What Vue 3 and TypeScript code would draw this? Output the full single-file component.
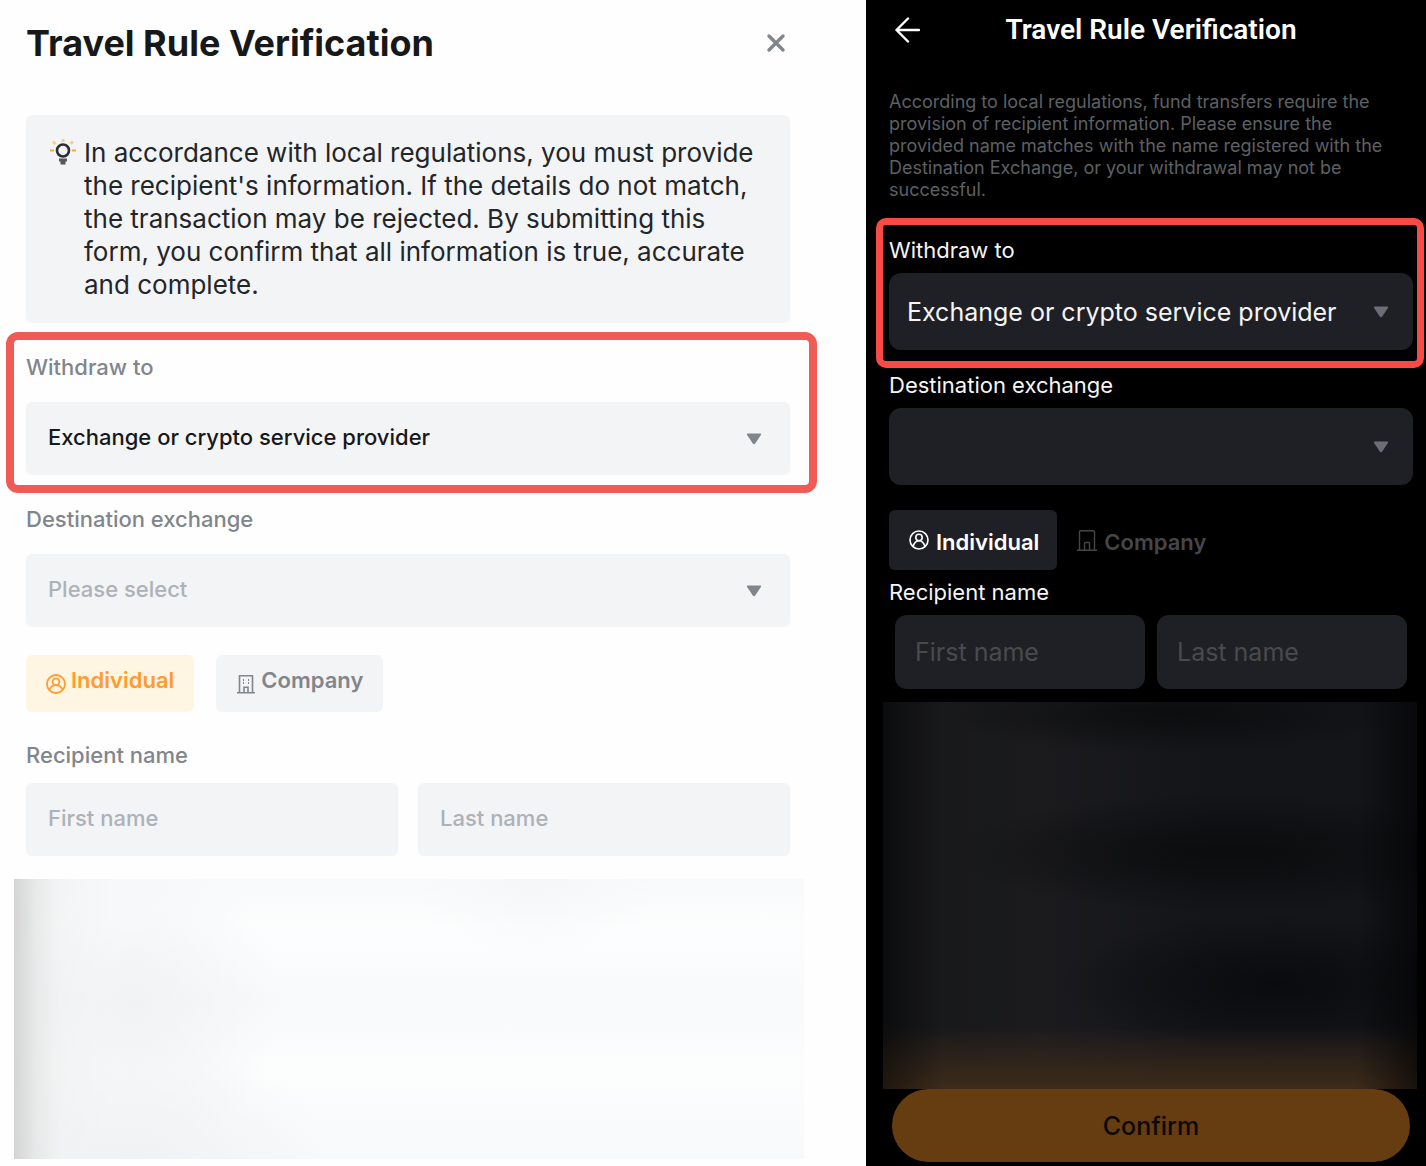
<script setup lang="ts">
import { ref } from 'vue'

type RecipientKind = 'individual' | 'company'

const destinations = ['Exchange or crypto service provider', 'Private wallet']
const exchanges = ['Binance', 'Coinbase', 'Kraken']

const webDestination = ref(destinations[0])
const webExchange = ref('')
const webKind = ref<RecipientKind>('individual')
const webFirst = ref('')
const webLast = ref('')

const appDestination = ref(destinations[0])
const appExchange = ref('')
const appKind = ref<RecipientKind>('individual')
const appFirst = ref('')
const appLast = ref('')
</script>

<template>
  <main class="page">
    <section class="web" aria-labelledby="web-title">
      <header class="web-header">
        <h1 id="web-title">Travel Rule Verification</h1>
        <button type="button" class="icon-button close" aria-label="Close">
          <svg width="20" height="20" viewBox="0 0 20 20" fill="none" stroke="#81858c" stroke-width="3.400" stroke-linecap="round">
            <path d="M3 3 17 17M17 3 3 17" />
          </svg>
        </button>
      </header>

      <div class="notice">
        <svg class="bulb" width="26" height="26" viewBox="0 0 26 26" fill="none">
          <circle cx="13" cy="11.500" r="6" stroke="#2c2e31" stroke-width="2.600" />
          <path d="M9 21h8M10.500 24h5" stroke="#55575a" stroke-width="3" />
          <path d="M0 11.500h4M22 11.500h4" stroke="#f7a928" stroke-width="2" />
          <path d="M13 0v3M3 2.500l2.500 2.500M23 2.500l-2.500 2.500" stroke="#f9cf88" stroke-width="3" />
        </svg>
        <p>
          In accordance with local regulations, you must provide the recipient's information. If the details do
          not match, the transaction may be rejected. By submitting this form, you confirm that all information
          is true, accurate and complete.
        </p>
      </div>

      <div class="field marked">
        <label for="web-destination">Withdraw to</label>
        <div class="select">
          <select id="web-destination" v-model="webDestination">
            <option v-for="item in destinations" :key="item">{{ item }}</option>
          </select>
          <svg class="caret" width="16" height="12" viewBox="0 0 16 12"><path d="M1.500.5h13q1.200.3.400 1.500L9.200 10.600Q8 12 6.800 10.600L1.100 2Q.3.8 1.500.5Z" /></svg>
        </div>
      </div>

      <div class="field">
        <label for="web-exchange">Destination exchange</label>
        <div class="select">
          <select id="web-exchange" v-model="webExchange" :class="{ empty: !webExchange }">
            <option value="">Please select</option>
            <option v-for="item in exchanges" :key="item">{{ item }}</option>
          </select>
          <svg class="caret" width="16" height="12" viewBox="0 0 16 12"><path d="M1.500.5h13q1.200.3.400 1.500L9.200 10.600Q8 12 6.800 10.600L1.100 2Q.3.8 1.500.5Z" /></svg>
        </div>
      </div>

      <div class="kinds">
        <button type="button" :class="{ active: webKind === 'individual' }" :aria-pressed="webKind === 'individual'" @click="webKind = 'individual'">
          <svg width="20" height="20" viewBox="0 0 20 20" fill="none" stroke="currentColor" stroke-width="1.800">
            <circle cx="10" cy="10" r="9" />
            <circle cx="10" cy="7.800" r="3.400" />
            <path d="M3.500 16c1.200-3.200 3.600-4.800 6.500-4.800s5.300 1.600 6.500 4.800" />
          </svg>
          Individual
        </button>
        <button type="button" :class="{ active: webKind === 'company' }" :aria-pressed="webKind === 'company'" @click="webKind = 'company'">
          <svg width="20" height="20" viewBox="0 0 20 20" fill="none" stroke="currentColor" stroke-width="1.600">
            <path d="M1 18.800h18M3.500 18.500V1.800h13v16.700M8 18.500v-5.300h4v5.300" />
            <path d="M7.500 5v6M12.500 5v6" stroke-width="1" stroke-dasharray="2 1" />
          </svg>
          Company
        </button>
      </div>

      <div class="field names-field">
        <label for="web-first">Recipient name</label>
        <div class="names">
          <input id="web-first" v-model="webFirst" type="text" placeholder="First name" />
          <input v-model="webLast" type="text" placeholder="Last name" aria-label="Last name" />
        </div>
      </div>

      <div class="veil" aria-hidden="true"></div>
    </section>

    <section class="app" aria-labelledby="app-title">
      <header class="app-header">
        <button type="button" class="icon-button" aria-label="Back">
          <svg width="26" height="26" viewBox="0 0 26 26" fill="none" stroke="#fff" stroke-width="2.400" stroke-linecap="round" stroke-linejoin="round">
            <path d="M25 13H2.500M14 1.500 2.500 13 14 24.500" />
          </svg>
        </button>
        <h2 id="app-title">Travel Rule Verification</h2>
      </header>

      <p class="intro">
        According to local regulations, fund transfers require the provision of recipient information. Please
        ensure the provided name matches with the name registered with the Destination Exchange, or your
        withdrawal may not be successful.
      </p>

      <div class="field marked">
        <label for="app-destination">Withdraw to</label>
        <div class="select">
          <select id="app-destination" v-model="appDestination">
            <option v-for="item in destinations" :key="item">{{ item }}</option>
          </select>
          <svg class="caret" width="16" height="12" viewBox="0 0 16 12"><path d="M1.500.5h13q1.200.3.400 1.500L9.200 10.600Q8 12 6.800 10.600L1.100 2Q.3.8 1.500.5Z" /></svg>
        </div>
      </div>

      <div class="field">
        <label for="app-exchange">Destination exchange</label>
        <div class="select">
          <select id="app-exchange" v-model="appExchange">
            <option value=""></option>
            <option v-for="item in exchanges" :key="item">{{ item }}</option>
          </select>
          <svg class="caret" width="16" height="12" viewBox="0 0 16 12"><path d="M1.500.5h13q1.200.3.400 1.500L9.200 10.600Q8 12 6.800 10.600L1.100 2Q.3.8 1.500.5Z" /></svg>
        </div>
      </div>

      <div class="kinds">
        <button type="button" :class="{ active: appKind === 'individual' }" :aria-pressed="appKind === 'individual'" @click="appKind = 'individual'">
          <svg width="20" height="24" viewBox="0 0 20 24" fill="none" stroke="currentColor" stroke-width="1.600">
            <circle cx="10" cy="10" r="9" />
            <circle cx="10" cy="7.500" r="3.200" />
            <path d="M4 16.500c1.200-3.700 3.200-5.800 6-5.800s4.800 2.100 6 5.800" />
          </svg>
          Individual
        </button>
        <button type="button" :class="{ active: appKind === 'company' }" :aria-pressed="appKind === 'company'" @click="appKind = 'company'">
          <svg width="20" height="24" viewBox="0 0 20 24" fill="none" stroke="currentColor" stroke-width="1.400">
            <path d="M0 20.300h20M2.500 20V1.700q0-1 1-1h13q1 0 1 1V20M7.500 20v-6.500q0-1 1-1h3q1 0 1 1V20" />
          </svg>
          Company
        </button>
      </div>

      <div class="field names-field">
        <label for="app-first">Recipient name</label>
        <div class="names">
          <input id="app-first" v-model="appFirst" type="text" placeholder="First name" />
          <input v-model="appLast" type="text" placeholder="Last name" aria-label="Last name" />
        </div>
      </div>

      <div class="veil" aria-hidden="true"></div>
      <button type="button" class="confirm">Confirm</button>
    </section>
  </main>
</template>

<style>
body {
  margin: 0;
  background: #fff;
}
</style>

<style scoped>
* {
  box-sizing: border-box;
}

.page {
  display: grid;
  grid-template-columns: minmax(0, 866fr) minmax(0, 560fr);
  min-height: 100vh;
  font-family: Inter, 'Liberation Sans', sans-serif;
}

h1,
h2,
p {
  margin: 0;
}

button,
input,
select {
  font: inherit;
  color: inherit;
  border: 0;
  margin: 0;
}

button {
  cursor: pointer;
}

.icon-button {
  display: flex;
  padding: 0;
  background: none;
}

.field,
.web,
.app {
  display: flex;
  flex-direction: column;
}

.select {
  display: grid;
  align-items: center;
}

.select > * {
  grid-area: 1 / 1;
}

.select select {
  width: 100%;
  appearance: none;
}

.caret {
  justify-self: end;
  pointer-events: none;
}

.names {
  display: grid;
  grid-template-columns: 1fr 1fr;
}

.names input {
  width: 100%;
  min-width: 0;
}

.kinds {
  display: flex;
}

.kinds button {
  display: flex;
  font-size: 22px;
  font-weight: 600;
  line-height: 28px;
}

.veil {
  flex: 1;
}

/* Light web dialog */
.web {
  padding: 0 76px 7px 26px;
  background: #fefefe;
  color: #17181a;
}

.web-header {
  display: flex;
  align-items: center;
  justify-content: space-between;
  height: 86px;
  padding-right: 4px;
}

.web-header h1 {
  font-size: 36px;
  font-weight: 700;
  line-height: 44px;
}

.notice {
  display: flex;
  gap: 8px;
  margin-top: 29px;
  padding: 21px 24px 22px;
  border-radius: 6px;
  background: #f3f4f6;
}

.notice p {
  font-size: 26px;
  line-height: 33px;
  color: #232527;
}

.bulb {
  flex: none;
  margin-top: 3px;
}

.web .field {
  margin-top: 14px;
  font-size: 22px;
  font-weight: 500;
}

.web label {
  margin-bottom: 23px;
  line-height: 24px;
  color: #81858c;
}

.web .marked {
  margin: 9px -27px 0 -20px;
  padding: 15px 19px 10px 12px;
  border: 8px solid #f15b55;
  border-radius: 12px;
}

.web select,
.web input {
  height: 73px;
  padding: 0 22px 3px;
  border-radius: 6px;
  background: #f3f4f6;
}

.web .empty,
.web input::placeholder {
  color: #adb1b8;
  opacity: 1;
}

.web .caret {
  margin-right: 28px;
  fill: #81858c;
}

.web .kinds {
  gap: 22px;
  margin-top: 28px;
}

.web .kinds button {
  align-items: flex-end;
  gap: 5px;
  padding: 11px 20px 18px;
  border-radius: 6px;
  background: #f3f4f6;
  color: #81858c;
}

.web .kinds .active {
  background: #fff5e3;
  color: #ff9c2e;
}

.web .names-field {
  margin-top: 31px;
}

.web .names-field label {
  margin-bottom: 16px;
}

.web .names {
  gap: 20px;
}

.web .veil {
  min-height: 200px;
  margin: 23px -14px 0 -12px;
  background:
    linear-gradient(90deg, #d4d4d4 0, #e4e5e5cc 22px, #eff0f099 45px, #f3f4f600 100px),
    radial-gradient(ellipse 150px 150px at 120px 45%, #f1f2f4, #f1f2f400),
    radial-gradient(ellipse 200px 120px at 120px 100%, #f0f1f3, #f0f1f300),
    radial-gradient(ellipse 120px 80px at 66% 0, #f6f7f9, #f6f7f900),
    linear-gradient(180deg, #f8f9fb, #fcfdfd 17%, #fbfcfd 28%, #f8f9fb 44%, #fcfdfd 68%, #f8f9fb);
}

/* Dark mobile screen */
.app {
  padding: 0 13px 4px 23px;
  background: #000;
  color: #f5f5f5;
}

.app-header {
  display: grid;
  grid-template-columns: 26px 1fr 26px;
  align-items: center;
  height: 60px;
  padding: 0 5px;
}

.app-header h2 {
  font-family: Roboto, 'Liberation Sans', sans-serif;
  font-size: 28px;
  font-weight: 600;
  line-height: 32px;
  text-align: center;
  color: #fff;
}

.intro {
  margin-top: 31px;
  padding-right: 12px;
  font-size: 18px;
  line-height: 22px;
  color: #5d6064;
}

.app .field {
  margin-top: 4px;
}

.app label {
  margin-bottom: 10px;
  font-size: 22px;
  line-height: 26px;
}

.app .marked {
  margin: 17px -11px 0 -13px;
  padding: 12px 4px 11px 6px;
  border: 7px solid #f84b45;
  border-radius: 10px;
}

.app select,
.app input {
  border-radius: 12px;
  background: #1f2025;
  font-size: 25px;
}

.app select {
  height: 77px;
  padding: 0 18px;
}

.app input {
  height: 74px;
  padding: 0 20px;
}

.app input::placeholder {
  color: #494a4e;
  opacity: 1;
}

.app .caret {
  margin-right: 24px;
  fill: #6b6e76;
}

.app .kinds {
  margin-top: 25px;
}

.app .kinds button {
  align-items: center;
  gap: 7px;
  height: 60px;
  padding: 4px 18px 0 20px;
  border-radius: 6px;
  background: none;
  color: #45464a;
}

.app .kinds .active {
  background: #1f2025;
  color: #fff;
}

.app .names-field {
  margin-top: 9px;
}

.app .names {
  gap: 12px;
  padding: 0 6px;
}

.app .veil {
  min-height: 200px;
  margin: 13px -4px 0 -6px;
  background:
    linear-gradient(90deg, #00000077 0, #00000000 60px, #00000000 calc(100% - 60px), #00000099 100%),
    linear-gradient(180deg, #3c2b1a00 84%, #3c2b1a99 93%, #3e2b1a 100%),
    radial-gradient(ellipse 220px 70px at 74% 73%, #0a0b0d, #0a0b0d00),
    radial-gradient(ellipse 280px 60px at 66% 39%, #0b0c0d, #0b0c0d00),
    radial-gradient(ellipse 240px 40px at 55% 3%, #0c0d0e, #0c0d0e00),
    linear-gradient(90deg, #17181a, #1b1b1e 30%, #141519 60%, #141519);
}

.confirm {
  height: 73px;
  margin: 0 3px;
  border-radius: 37px;
  background: #653d11;
  color: #0c0804;
  font-size: 25px;
  font-weight: 500;
}
</style>
